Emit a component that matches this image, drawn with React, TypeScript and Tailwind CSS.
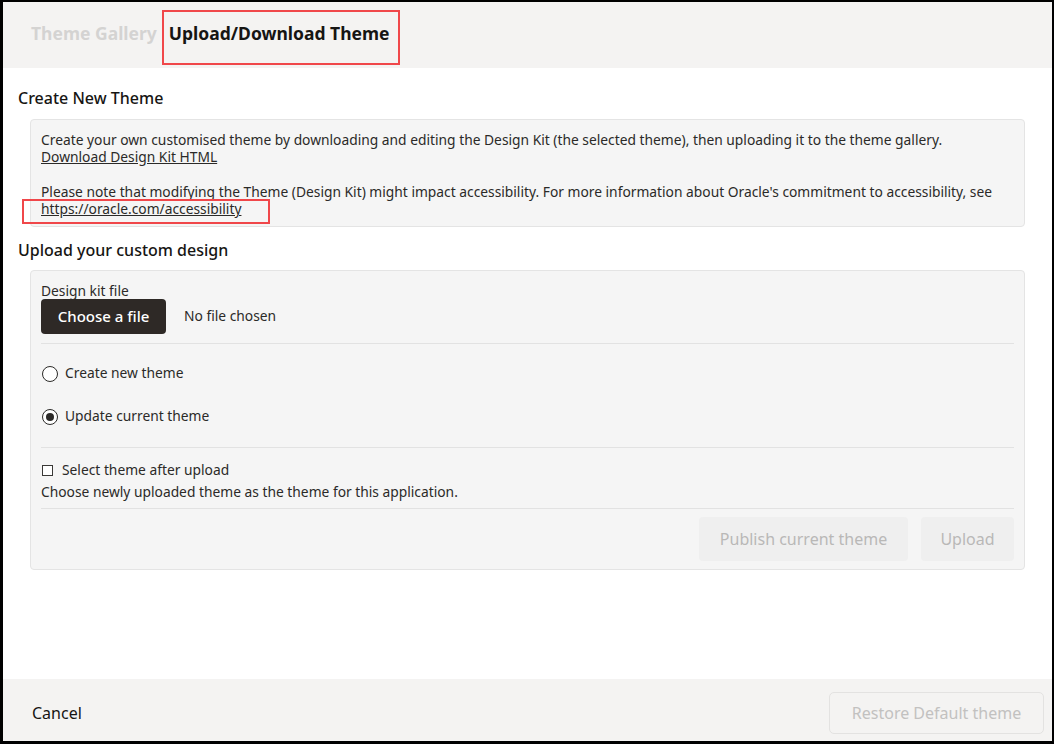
const font = { fontFamily: '"Noto Sans", "Open Sans", sans-serif' };

const Divider = () => <div className="h-px bg-[#e2e2e2]" />;

const App = () => {
  return (
    <div
      className="w-[1054px] h-[744px] flex flex-col bg-white border-black border-l-[3px] border-t-2 border-r-2 border-b-[3px] text-[#161513]"
      style={font}
    >
      {/* tabs */}
      <header className="h-[66px] bg-[#f4f3f2] flex items-center pl-[28px] pb-[4px] gap-[12px] shrink-0">
        <span className="text-[17.5px] leading-[24px] font-bold text-[#d4d3d2]">Theme Gallery</span>
        <span className="relative inline-block text-[17.5px] leading-[24px] font-bold text-[#161513]">
          Upload/Download Theme
          <span className="absolute -left-[7px] -right-[10px] -top-[11px] -bottom-[20px] border-[2.5px] border-[#f0474a]" />
        </span>
      </header>

      <main className="flex-1 px-[15px] pt-[18px]">
        <h2 className="text-[16px] leading-[24px] font-medium">Create New Theme</h2>
        <section className="ml-[12px] mr-[12px] mt-[9px] bg-[#f5f5f5] border border-[#e4e4e4] rounded-[4px] px-[10px] pt-[11px] pb-[9px] text-[13.8px] leading-[17px] text-[#2b2a28]">
          <p>
            Create your own customised theme by downloading and editing the Design Kit (the selected theme), then uploading it to the theme gallery.
          </p>
          <a className="underline">Download Design Kit HTML</a>
          <p className="mt-[18px]">
            Please note that modifying the Theme (Design Kit) might impact accessibility. For more information about Oracle's commitment to accessibility, see
          </p>
          <span className="relative inline-block">
            <a className="underline">https://oracle.com/accessibility</a>
            <span className="absolute -left-[19px] -right-[29px] -top-[1px] -bottom-[7px] border-[2.5px] border-[#f0474a]" />
          </span>
        </section>

        <h2 className="mt-[11px] text-[16px] leading-[24px] font-medium">Upload your custom design</h2>
        <section className="ml-[12px] mr-[12px] mt-[8px] bg-[#f5f5f5] border border-[#e4e4e4] rounded-[4px] px-[10px] pt-[12px] pb-[8px] text-[13.8px] text-[#2b2a28]">
          <div className="leading-[16px]">Design kit file</div>
          <div className="flex items-center gap-[18px]">
            <button className="h-[35px] w-[125px] rounded-[4px] bg-[#2e2926] text-white text-[15px] font-medium">
              Choose a file
            </button>
            <span>No file chosen</span>
          </div>
          <div className="mt-[9px]">
            <Divider />
          </div>
          <label className="flex items-center gap-[7px] h-[43px] mt-[8px]">
            <span className="w-[16px] h-[16px] rounded-full border-[1.5px] border-[#2b2a28] bg-white ml-[1px]" />
            Create new theme
          </label>
          <label className="flex items-center gap-[7px] h-[43px]">
            <span className="w-[16px] h-[16px] rounded-full border-[1.5px] border-[#2b2a28] bg-white ml-[1px] flex items-center justify-center">
              <span className="w-[8px] h-[8px] rounded-full bg-[#2b2a28]" />
            </span>
            Update current theme
          </label>
          <div className="mt-[9px]">
            <Divider />
          </div>
          <label className="flex items-center gap-[9px] mt-[12px] leading-[20px]">
            <span className="w-[11px] h-[11px] border border-[#3a3937] bg-white ml-[1px]" />
            Select theme after upload
          </label>
          <p className="leading-[20px] mt-[2px]">Choose newly uploaded theme as the theme for this application.</p>
          <div className="mt-[6px]">
            <Divider />
          </div>
          <div className="flex justify-end gap-[13px] mt-[8px]">
            <button className="h-[44px] w-[209px] rounded-[4px] bg-[#efefef] text-[#b9b8b7] text-[16px]">
              Publish current theme
            </button>
            <button className="h-[44px] w-[93px] rounded-[4px] bg-[#efefef] text-[#b9b8b7] text-[16px]">
              Upload
            </button>
          </div>
        </section>
      </main>

      <footer className="h-[62px] bg-[#f4f3f2] flex items-center justify-between pl-[29px] pr-[8px] pt-[6px] shrink-0">
        <span className="text-[16px] text-[#161513]">Cancel</span>
        <button className="h-[42px] w-[215px] rounded-[5px] border border-[#e3e2e1] text-[#c2c1c0] text-[16px]">
          Restore Default theme
        </button>
      </footer>
    </div>
  );
};

export default App;
